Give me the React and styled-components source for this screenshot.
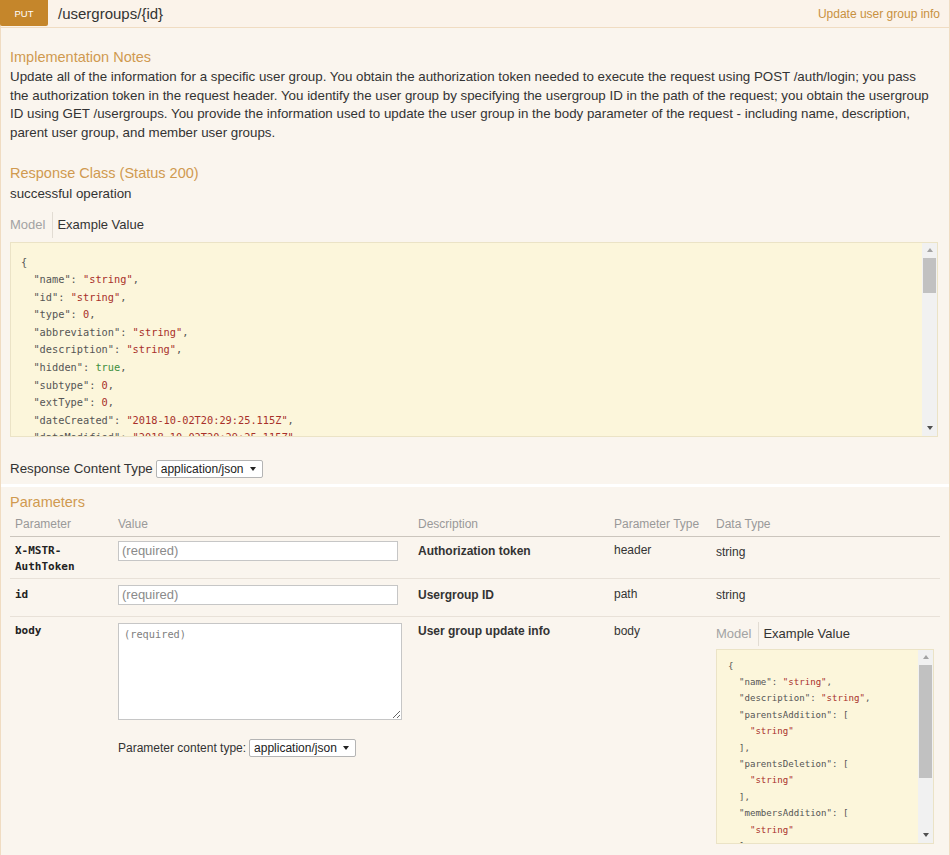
import React from 'react';
import styled, { createGlobalStyle } from 'styled-components';

const sans = `"Liberation Sans", Arial, Helvetica, sans-serif`;
const mono = `"DejaVu Sans Mono", "Liberation Mono", monospace`;

const GlobalStyle = createGlobalStyle`
  html, body { margin: 0; padding: 0; background: #ffffff; }
  body { font-family: ${sans}; color: #333; }
  * { box-sizing: border-box; }
`;

const Operation = styled.section`
  width: 950px;
`;

const Heading = styled.header`
  display: flex;
  align-items: center;
  height: 28px;
  background: #fbf3ea;
  border: 1px solid #f0dcc2;
  border-top: none;
`;

const Method = styled.span`
  align-self: flex-start;
  margin-left: -1px;
  width: 48px;
  height: 26px;
  display: flex;
  align-items: center;
  justify-content: center;
  padding-top: 1px;
  background: #c5862b;
  color: #fff;
  font-size: 9.5px;
  text-transform: uppercase;
  border-radius: 0 0 2px 2px;
`;

const Path = styled.span`
  margin-left: 10px;
  font-size: 15px;
  color: #333;
`;

const Summary = styled.span`
  margin-left: auto;
  margin-right: 9px;
  font-size: 12px;
  color: #c8913f;
`;

const Content = styled.div`
  display: flow-root;
  background: #faf5ee;
  border: 1px solid #f0dcc2;
  border-top: none;
  padding: 0 9px 20px;
`;

const SectionTitle = styled.h4`
  margin: ${(p) => p.$top}px 0 0;
  font-size: 14.5px;
  line-height: 18px;
  font-weight: normal;
  color: #d09a50;
`;

const Notes = styled.p`
  margin: 2px 5px 0 0;
  font-size: 13.33px;
  line-height: 18.7px;
  color: #333;
`;

const Plain = styled.div`
  margin-top: 3px;
  font-size: 13.33px;
  line-height: 18.7px;
  color: #333;
`;

const Tabs = styled.div`
  display: flex;
  align-items: stretch;
  height: ${(p) => p.$h}px;
  margin-top: ${(p) => p.$top}px;
  font-size: 13px;
`;

const Tab = styled.span`
  display: flex;
  align-items: center;
  padding: ${(p) => (p.$active ? '0 0 0 4px' : '0 7px 0 0')};
  color: ${(p) => (p.$active ? '#333' : '#a3a3a3')};
  border-left: ${(p) => (p.$active ? '1px solid #e2dcd3' : 'none')};
`;

const CodeBox = styled.div`
  display: flex;
  width: ${(p) => p.$w}px;
  height: ${(p) => p.$h}px;
  margin: ${(p) => p.$top}px 0 ${(p) => p.$bottom || 0}px;
  background: #fcf6db;
  border: 1px solid #ebe3c6;
`;

const Code = styled.pre`
  flex: 1;
  margin: 0;
  overflow: hidden;
  padding: ${(p) => p.$pad};
  font-family: ${mono};
  font-size: ${(p) => p.$size}px;
  line-height: ${(p) => p.$lh}px;
  color: #555;
  white-space: pre;
`;

const Key = styled.span`color: #555;`;
const Str = styled.span`color: #a8302a;`;
const Lit = styled.span`color: #3e8f3e;`;
const Num = styled.span`color: #a8302a;`;

const ScrollBar = styled.div`
  flex: none;
  width: 15px;
  display: flex;
  flex-direction: column;
  background: #f1f1f1;
`;

const ScrollButton = styled.div`
  flex: none;
  height: 15px;
  display: flex;
  align-items: center;
  justify-content: center;
`;

const Arrow = styled.span`
  width: 0;
  height: 0;
  border-left: 3.5px solid transparent;
  border-right: 3.5px solid transparent;
  ${(p) =>
    p.$dir === 'up'
      ? 'border-bottom: 4px solid #a3a3a3;'
      : 'border-top: 4px solid #505050;'}
`;

const Track = styled.div`
  flex: 1;
  padding: 0 1px;
`;

const Thumb = styled.div`
  height: ${(p) => p.$size}px;
  background: #c1c1c1;
`;

const ContentTypeRow = styled.div`
  display: flex;
  align-items: center;
  gap: 3px;
  height: 18px;
  margin-top: ${(p) => p.$top}px;
  font-size: ${(p) => p.$size}px;
  color: #333;
`;

const Select = styled.span`
  display: inline-flex;
  align-items: center;
  gap: 6px;
  height: 18px;
  padding: 0 6px 0 4px;
  border: 1px solid #b4b4b4;
  border-radius: 2px;
  background: #fff;
  font-size: 12px;
  color: #222;
`;

const Caret = styled.span`
  width: 0;
  height: 0;
  border-left: 3px solid transparent;
  border-right: 3px solid transparent;
  border-top: 4px solid #222;
`;

const Divider = styled.div`
  height: 3px;
  margin: 6px -9px 0;
  background: #ffffff;
`;

const ParamTable = styled.table`
  width: 930px;
  border-collapse: collapse;
  table-layout: fixed;
`;

const Th = styled.th`
  text-align: left;
  font-weight: normal;
  font-size: 12px;
  line-height: 15px;
  color: #999;
  padding: 6px 5px 4px;
  border-bottom: 1px solid #cbc5bd;
`;

const Td = styled.td`
  vertical-align: top;
  padding: 5px 5px 3px;
  font-size: 12px;
  line-height: 16px;
  color: #333;
  border-bottom: 1px solid #e8e1d8;
`;

const CellText = styled.div`
  padding-top: ${(p) => p.$shift || 0}px;
`;

const ParamName = styled.code`
  display: block;
  padding-top: ${(p) => p.$shift || 0}px;
  font-family: ${mono};
  font-weight: bold;
  font-size: 11px;
  line-height: 16px;
  color: #222;
`;

const Desc = styled.strong`
  display: block;
  padding-top: ${(p) => p.$shift || 0}px;
  font-size: 12px;
  color: #333;
`;

const TextInput = styled.input`
  display: block;
  width: 280px;
  height: 20px;
  margin: ${(p) => (p.$first ? '-1px' : '1px')} 0 8px;
  padding: 0 3px;
  border: 1px solid #c6c6c6;
  background: #fff;
  font-family: ${sans};
  font-size: 13px;
  &::placeholder { color: #8a8a8a; }
`;

const BodyArea = styled.textarea`
  display: block;
  width: 284px;
  height: 97px;
  margin: 1px 0 0;
  padding: 4px 5px;
  border: 1px solid #c6c6c6;
  background: #fff;
  font-family: ${mono};
  font-size: 10.3px;
  &::placeholder { color: #808080; }
`;

const tokenRe = /("[^"]*")(\s*:)?|\b(true|false|null)\b|(-?\d+(?:\.\d+)?)/g;

function highlight(line) {
  const out = [];
  let last = 0;
  let i = 0;
  let m;
  tokenRe.lastIndex = 0;
  while ((m = tokenRe.exec(line))) {
    if (m.index > last) out.push(line.slice(last, m.index));
    if (m[1] && m[2] !== undefined) {
      out.push(<Key key={i++}>{m[1]}</Key>);
      out.push(m[2]);
    } else if (m[1]) out.push(<Str key={i++}>{m[1]}</Str>);
    else if (m[3]) out.push(<Lit key={i++}>{m[3]}</Lit>);
    else out.push(<Num key={i++}>{m[4]}</Num>);
    last = tokenRe.lastIndex;
  }
  if (last < line.length) out.push(line.slice(last));
  return out;
}

function JsonCode({ lines, ...rest }) {
  return (
    <Code {...rest}>
      {lines.map((l, idx) => (
        <React.Fragment key={idx}>
          {highlight(l)}
          {'\n'}
        </React.Fragment>
      ))}
    </Code>
  );
}

function Scroller({ thumb }) {
  return (
    <ScrollBar>
      <ScrollButton><Arrow $dir="up" /></ScrollButton>
      <Track><Thumb $size={thumb} /></Track>
      <ScrollButton><Arrow $dir="down" /></ScrollButton>
    </ScrollBar>
  );
}

function ModelTabs({ h, top }) {
  return (
    <Tabs $h={h} $top={top}>
      <Tab>Model</Tab>
      <Tab $active>Example Value</Tab>
    </Tabs>
  );
}

const responseLines = [
  '{',
  '  "name": "string",',
  '  "id": "string",',
  '  "type": 0,',
  '  "abbreviation": "string",',
  '  "description": "string",',
  '  "hidden": true,',
  '  "subtype": 0,',
  '  "extType": 0,',
  '  "dateCreated": "2018-10-02T20:29:25.115Z",',
  '  "dateModified": "2018-10-02T20:29:25.115Z",',
  '  "version": "string",',
  '  "acg": 0,',
  '  "owner": {',
  '    "name": "string",',
  '    "id": "string"',
  '  }',
  '}',
];

const bodyLines = [
  '{',
  '  "name": "string",',
  '  "description": "string",',
  '  "parentsAddition": [',
  '    "string"',
  '  ],',
  '  "parentsDeletion": [',
  '    "string"',
  '  ],',
  '  "membersAddition": [',
  '    "string"',
  '  ],',
  '  "membersDeletion": [',
  '    "string"',
  '  ]',
  '}',
];

export default function App() {
  return (
    <>
      <GlobalStyle />
      <Operation>
        <Heading>
          <Method>put</Method>
          <Path>/usergroups/{'{id}'}</Path>
          <Summary>Update user group info</Summary>
        </Heading>
        <Content>
          <SectionTitle $top={20}>Implementation Notes</SectionTitle>
          <Notes>
            Update all of the information for a specific user group. You obtain the authorization token
            needed to execute the request using POST /auth/login; you pass the authorization token in the
            request header. You identify the user group by specifying the usergroup ID in the path of the
            request; you obtain the usergroup ID using GET /usergroups. You provide the information used to
            update the user group in the body parameter of the request - including name, description, parent
            user group, and member user groups.
          </Notes>

          <SectionTitle $top={21}>Response Class (Status 200)</SectionTitle>
          <Plain>successful operation</Plain>
          <ModelTabs h={26} top={8} />
          <CodeBox $w={928} $h={195} $top={4}>
            <JsonCode lines={responseLines} $pad="11px 10px" $size={10.3} $lh={17.6} />
            <Scroller thumb={35} />
          </CodeBox>

          <ContentTypeRow $top={23} $size={13.33}>
            Response Content Type
            <Select>application/json<Caret /></Select>
          </ContentTypeRow>

          <Divider />

          <SectionTitle $top={6}>Parameters</SectionTitle>
          <ParamTable>
            <colgroup>
              <col style={{ width: 103 }} />
              <col style={{ width: 300 }} />
              <col style={{ width: 196 }} />
              <col style={{ width: 102 }} />
              <col style={{ width: 229 }} />
            </colgroup>
            <thead>
              <tr>
                <Th>Parameter</Th>
                <Th>Value</Th>
                <Th>Description</Th>
                <Th>Parameter Type</Th>
                <Th>Data Type</Th>
              </tr>
            </thead>
            <tbody>
              <tr>
                <Td><ParamName $shift={1}>X-MSTR-AuthToken</ParamName></Td>
                <Td><TextInput $first placeholder="(required)" /></Td>
                <Td><Desc $shift={1}>Authorization token</Desc></Td>
                <Td>header</Td>
                <Td><CellText $shift={2}>string</CellText></Td>
              </tr>
              <tr>
                <Td><ParamName $shift={3}>id</ParamName></Td>
                <Td><TextInput placeholder="(required)" /></Td>
                <Td><Desc $shift={3}>Usergroup ID</Desc></Td>
                <Td><CellText $shift={2}>path</CellText></Td>
                <Td><CellText $shift={3}>string</CellText></Td>
              </tr>
              <tr>
                <Td><ParamName $shift={1}>body</ParamName></Td>
                <Td>
                  <BodyArea placeholder="(required)" />
                  <ContentTypeRow $top={19} $size={12}>
                    Parameter content type:
                    <Select>application/json<Caret /></Select>
                  </ContentTypeRow>
                </Td>
                <Td><Desc $shift={1}>User group update info</Desc></Td>
                <Td><CellText $shift={1}>body</CellText></Td>
                <Td>
                  <ModelTabs h={24} top={0} />
                  <CodeBox $w={218} $h={195} $top={3} $bottom={30}>
                    <JsonCode lines={bodyLines} $pad="8px 8px 8px 11px" $size={9.1} $lh={16.4} />
                    <Scroller thumb={113} />
                  </CodeBox>
                </Td>
              </tr>
            </tbody>
          </ParamTable>
        </Content>
      </Operation>
    </>
  );
}
